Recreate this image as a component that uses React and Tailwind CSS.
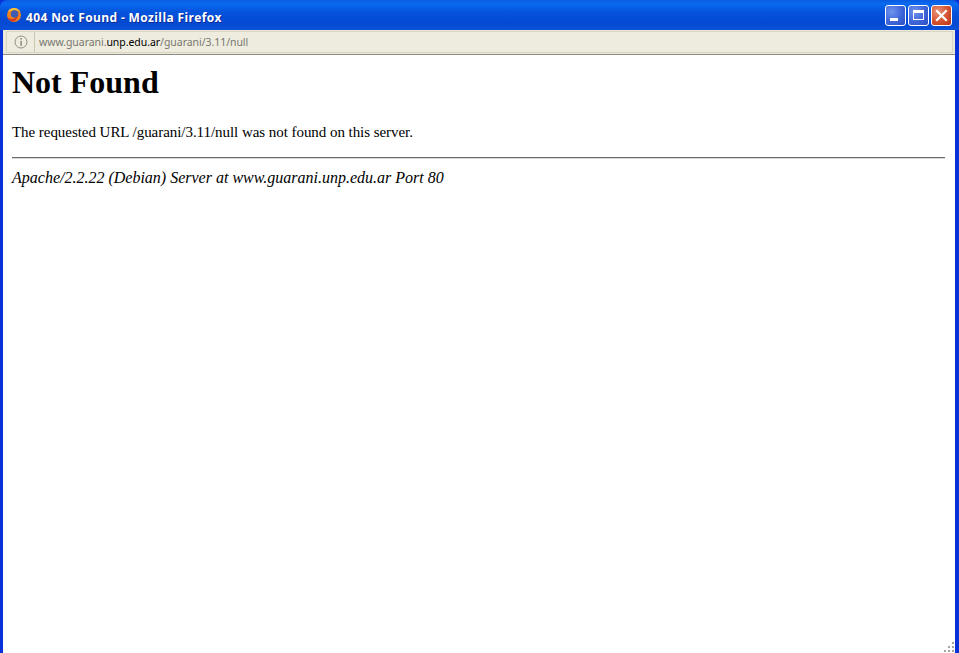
import React from 'react';

function FirefoxLogo() {
  return (
    <svg width="16" height="16" viewBox="0 0 16 16" className="shrink-0">
      <circle cx="8" cy="8" r="7" fill="#f0821e" />
      <path d="M2 4.5C3 2.4 5.4 1 8 1c3 0 5.4 1.8 6.4 4.4C13 3.6 10.6 3 8.6 3.2 6 3.4 3.8 4 2 4.5z" fill="#f9c43a" />
      <circle cx="8.6" cy="7" r="3.8" fill="#3d5bb0" />
      <path d="M1.4 9.6C2.4 11.6 5 12.4 7.6 11.8c1.8-.4 3.2-1.4 4-3 .2 2.6-1.6 5-4.4 5.8-2.8-.2-5.2-2.2-5.8-5z" fill="#d9361c" />
    </svg>
  );
}

function WinButton({ children, close }) {
  return (
    <div
      className={
        close
          ? 'w-[21px] h-[21px] rounded-[3px] border border-white flex items-center justify-center bg-[radial-gradient(circle_at_30%_30%,#e8937a,#d5532f_55%,#b8321a)]'
          : 'w-[21px] h-[21px] rounded-[3px] border border-white flex items-center justify-center bg-[radial-gradient(circle_at_30%_30%,#6f93ee,#3e66d8_55%,#2a4cc4)]'
      }
    >
      {children}
    </div>
  );
}

export default function App() {
  return (
    <div className="w-[959px] h-[653px] overflow-hidden flex flex-col bg-[#0831d9] font-['Liberation_Sans',sans-serif]">
      <div className="h-[30px] shrink-0 rounded-t-[7px] flex items-center pl-[6px] pr-[7px] gap-[4px] bg-[linear-gradient(180deg,#0a5ae0_0%,#0a6af0_12%,#0553dc_40%,#0449d2_75%,#0a50d8_100%)]">
        <FirefoxLogo />
        <span className="text-white text-[12px] font-bold tracking-[0.37px] flex-1 pt-[5px] font-['Open_Sans',sans-serif] [text-shadow:1px_1px_0_#0a2a9a] leading-none">
          404 Not Found - Mozilla Firefox
        </span>
        <div className="flex gap-[2px]">
          <WinButton>
            <div className="w-[8px] h-[3px] bg-white mt-[9px] mr-[4px]" />
          </WinButton>
          <WinButton>
            <div className="w-[11px] h-[10px] border border-white border-t-[3px]" />
          </WinButton>
          <WinButton close>
            <svg width="13" height="13" viewBox="0 0 13 13">
              <path d="M2 2l9 9M11 2l-9 9" stroke="#fff" strokeWidth="2.2" strokeLinecap="square" />
            </svg>
          </WinButton>
        </div>
      </div>

      <div className="flex-1 min-h-0 flex flex-col ml-[3px] mr-[4px] bg-white relative">
        <div className="h-[25px] shrink-0 bg-[#ece9d8] border-b border-[#8d8c84] pl-[3px] pr-[2px] pt-[1px] pb-[1px]">
          <div className="h-full flex items-center border border-[#d8d5c4] bg-[#eeecdf]">
            <div className="w-[28px] h-full flex items-center justify-center border-r border-[#c9c6b5]">
              <svg width="14" height="14" viewBox="0 0 14 14">
                <circle cx="7" cy="7" r="6" fill="none" stroke="#8f8f88" />
                <rect x="6.4" y="3" width="1.4" height="1.6" fill="#80807a" />
                <rect x="6.4" y="5.8" width="1.4" height="5" fill="#80807a" />
              </svg>
            </div>
            <span className="ml-[4px] text-[10.5px] tracking-[-0.05px] text-[#77776f] font-['Noto_Sans',sans-serif] leading-none">
              www.guarani.<span className="text-black">unp.edu.ar</span>/guarani/3.11/null
            </span>
          </div>
        </div>

        <div className="flex-1 pl-[9px] pr-[10px] font-['Liberation_Serif',serif] text-black">
          <h1 className="text-[32px] font-bold leading-[36px] mt-[9px]">Not Found</h1>
          <p className="text-[15px] tracking-[-0.05px] leading-[16px] mt-[24px]">The requested URL /guarani/3.11/null was not found on this server.</p>
          <hr className="mt-[17px] border-0 h-[2px] bg-[linear-gradient(180deg,#6b6b6b_50%,#d8d8d8_50%)]" />
          <address className="text-[16px] italic leading-[18px] mt-[10px]">Apache/2.2.22 (Debian) Server at www.guarani.unp.edu.ar Port 80</address>
        </div>

        <svg width="12" height="12" viewBox="0 0 12 12" className="absolute right-0 bottom-0">
          <g fill="#a9a79c">
            <rect x="9" y="1" width="2" height="2" />
            <rect x="5" y="5" width="2" height="2" />
            <rect x="9" y="5" width="2" height="2" />
            <rect x="1" y="9" width="2" height="2" />
            <rect x="5" y="9" width="2" height="2" />
            <rect x="9" y="9" width="2" height="2" />
          </g>
        </svg>
      </div>
    </div>
  );
}
